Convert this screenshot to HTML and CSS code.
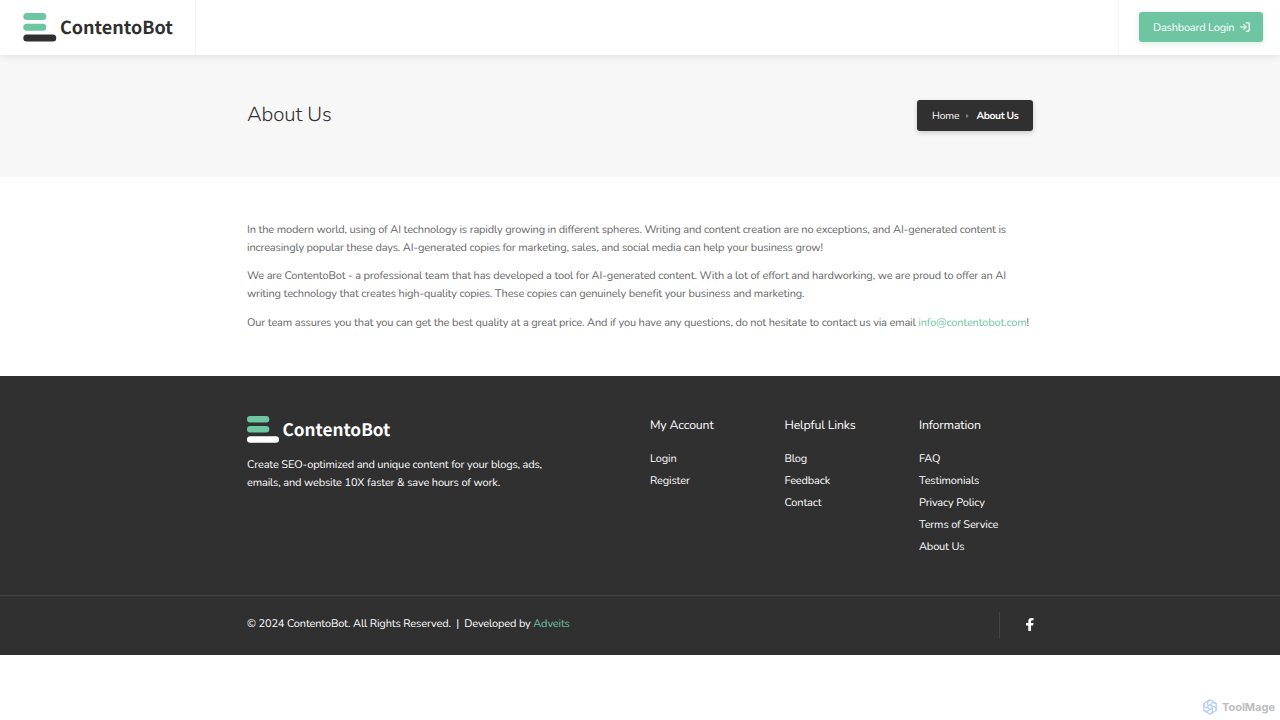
FILE: index.html
```html
<!DOCTYPE html>
<html lang="en">

<head>
    <meta charset="UTF-8">
    <meta name="viewport" content="width=device-width, initial-scale=1.0">
    <title>About Us - ContentoBot</title>
    <link rel="stylesheet" href="styles.css">
</head>

<body>
    <header class="header">
        <a href="#" class="header-logo">
            <svg class="logo-mark" width="34" height="29" viewBox="0 0 34 29">
                <rect x="0.3" y="0" width="23" height="7" rx="3.5" fill="#6ec5a1" />
                <rect x="0.3" y="10.8" width="23" height="7" rx="3.5" fill="#6ec5a1" />
                <rect x="0.3" y="21.4" width="33" height="7" rx="3.5" fill="#303030" />
            </svg>
            <span class="logo-text">ContentoBot</span>
        </a>
        <div class="header-right">
            <a href="#" class="login-btn">
                <span class="login-text">Dashboard Login</span>
                <svg width="10" height="10" viewBox="0 0 10 10" fill="none" stroke="#fff" stroke-width="1.2">
                    <path d="M0 5h6M3.5 2.3L6.2 5L3.5 7.7M5.8 0.8h2.6q.8 0 .8.8v6.8q0 .8-.8.8H5.8" />
                </svg>
            </a>
        </div>
    </header>

    <section class="titlebar">
        <div class="container titlebar-inner">
            <h1>About Us</h1>
            <nav class="breadcrumbs">
                <a href="#" class="crumb-home">Home</a>
                <span class="crumb-arrow"></span>
                <span class="crumb-here">About Us</span>
            </nav>
        </div>
    </section>

    <main class="container content">
        <p>
            <span class="line">In the modern world, using of AI technology is rapidly growing in different spheres. Writing and content creation are no exceptions, and AI-generated content is</span>
            <span class="line">increasingly popular these days. AI-generated copies for marketing, sales, and social media can help your business grow!</span>
        </p>
        <p>
            <span class="line">We are ContentoBot - a professional team that has developed a tool for AI-generated content. With a lot of effort and hardworking, we are proud to offer an AI</span>
            <span class="line">writing technology that creates high-quality copies. These copies can genuinely benefit your business and marketing.</span>
        </p>
        <p>
            <span class="line">Our team assures you that you can get the best quality at a great price. And if you have any questions, do not hesitate to contact us via email <a href="#">info@contentobot.com</a>!</span>
        </p>
    </main>

    <footer class="footer">
        <div class="container footer-top">
            <div class="footer-about">
                <div class="footer-logo">
                    <svg class="logo-mark" width="33" height="27" viewBox="0 0 33 27">
                        <rect x="0" y="0" width="22.3" height="6.4" rx="3.2" fill="#6ec5a1" />
                        <rect x="0" y="10" width="22.3" height="6.4" rx="3.2" fill="#6ec5a1" />
                        <rect x="0" y="20.2" width="32" height="6.5" rx="3.2" fill="#fff" />
                    </svg>
                    <span class="logo-text">ContentoBot</span>
                </div>
                <p>
                    <span class="line">Create SEO-optimized and unique content for your blogs, ads,</span>
                    <span class="line">emails, and website 10X faster &amp; save hours of work.</span>
                </p>
            </div>
            <div class="footer-links">
                <h3>My Account</h3>
                <ul>
                    <li><a href="#">Login</a></li>
                    <li><a href="#">Register</a></li>
                </ul>
            </div>
            <div class="footer-links">
                <h3>Helpful Links</h3>
                <ul>
                    <li><a href="#">Blog</a></li>
                    <li><a href="#">Feedback</a></li>
                    <li><a href="#">Contact</a></li>
                </ul>
            </div>
            <div class="footer-links">
                <h3>Information</h3>
                <ul>
                    <li><a href="#">FAQ</a></li>
                    <li><a href="#">Testimonials</a></li>
                    <li><a href="#">Privacy Policy</a></li>
                    <li><a href="#">Terms of Service</a></li>
                    <li><a href="#">About Us</a></li>
                </ul>
            </div>
        </div>
        <div class="footer-bottom">
            <div class="container footer-bottom-inner">
                <div class="copyright">© 2024 ContentoBot. All Rights Reserved. &nbsp;|&nbsp; Developed by <a href="#">Adveits</a></div>
                <a href="#" class="social">
                    <svg width="8" height="13" viewBox="0 0 8 13">
                        <path fill="#fff" d="M2.3 13V7.4H0V5h2.3V3.2C2.3 1.1 3.5 0 5.4 0C6.4 0 7.6.2 7.6.2v2H6.5C5.3 2.2 5 2.9 5 3.6V5h2.5l-.4 2.4H5V13z" />
                    </svg>
                </a>
            </div>
        </div>
    </footer>

    <div class="watermark">
        <svg width="16" height="16" viewBox="0 0 16 16" fill="none" stroke="#b4cdf3" stroke-width="1.2" stroke-linejoin="round">
            <path d="M8 .8l6.2 3.6v7.2L8 15.2l-6.2-3.6V4.4z" />
            <circle cx="8" cy="8" r="2.2" />
            <path d="M8 .8c-3 2-3 4-1.9 6M14.2 4.4C11 3 9 4.2 8.2 5.900M14.2 11.6c.4-3.4-2-4.7-4-4.2M8 15.2c3-2 3-4 1.9-6M1.8 11.6c3.2 1.4 5.2.2 6-1.5M1.8 4.4c-.4 3.4 2 4.7 4 4.2" />
        </svg>
        <span>ToolMage</span>
    </div>
</body>

</html>
```
FILE: styles.css
```css
* {
    box-sizing: border-box;
}

body,
h1,
h3,
p,
ul {
    margin: 0;
    padding: 0;
}

body {
    font-family: "Nunito", "Lato", sans-serif;
    font-size: 11px;
    letter-spacing: -0.153px;
    line-height: 18px;
    color: #666;
    background: #fff;
    height: 720px;
    overflow: hidden;
    text-rendering: geometricPrecision;
}

a {
    color: #6ec5a1;
    text-decoration: none;
}

li {
    list-style: none;
}

.line {
    display: block;
    white-space: nowrap;
}

.container {
    width: 786px;
    margin: 0 auto;
}

.logo-mark {
    display: block;
}

.logo-text {
    font-family: "Source Sans Pro", "Noto Sans CJK SC", sans-serif;
    font-weight: 700;
    letter-spacing: 0;
    white-space: nowrap;
}

/* header */
.header {
    height: 55px;
    display: flex;
    justify-content: space-between;
    background: #fff;
    position: relative;
    box-shadow: 0 0 9px rgba(0, 0, 0, .12);
}

.header-logo {
    display: flex;
    width: 196px;
    padding: 13px 0 0 23px;
    border-right: 1px solid #f2f2f2;
    height: 54px;
}

.header-logo .logo-text {
    font-size: 18px;
    line-height: 28px;
    margin-left: 3px;
    color: #303030;
}

.header-right {
    width: 162px;
    height: 54px;
    padding: 12px 0 0 20px;
    border-left: 1px solid #f4f4f4;
}

.login-btn {
    display: flex;
    align-items: center;
    gap: 5px;
    width: 124px;
    height: 30px;
    padding-left: 14px;
    color: #fff;
    background: #6ec5a1;
    border-radius: 3px;
    box-shadow: 0 2px 6px rgba(110, 197, 161, .25);
}

.login-text {
    width: 82px;
    padding-top: 1px;
    letter-spacing: -0.2px;
    white-space: nowrap;
}

/* titlebar */
.titlebar {
    height: 122px;
    background: #f7f7f7;
}

.titlebar-inner {
    height: 121px;
    display: flex;
    justify-content: space-between;
    align-items: center;
}

h1 {
    font-size: 20.4px;
    font-weight: 300;
    letter-spacing: -0.1px;
    line-height: 28px;
    padding-bottom: 2px;
    color: #303030;
}

.breadcrumbs {
    display: flex;
    align-items: center;
    width: 116px;
    height: 31px;
    padding-left: 15px;
    font-size: 10.3px;
    color: #fff;
    background: #303030;
    border-radius: 3px;
    box-shadow: 0 2px 5px rgba(0, 0, 0, .18);
}

.crumb-home {
    width: 34px;
    color: #fff;
}

.crumb-arrow {
    border: 2px solid transparent;
    border-left: 3px solid #808080;
    border-right: 0;
    margin-right: 7.5px;
}

.crumb-here {
    font-weight: 700;
    letter-spacing: -0.4px;
}

/* text */
.content {
    height: 199px;
    padding-top: 43.5px;
}

.content p {
    margin-bottom: 10.67px;
}

/* footer */
.footer {
    height: 279px;
    background: #303030;
    color: #fff;
}

.footer-top {
    display: grid;
    grid-template-columns: 403px 134.5px 134.5px 114px;
    height: 219px;
    padding-top: 40px;
}

.footer-logo {
    display: flex;
}

.footer-logo .logo-text {
    font-size: 17.2px;
    line-height: 26px;
    margin-left: 2.5px;
}

.footer-about p {
    margin-top: 13px;
    line-height: 17.5px;
}

h3 {
    font-size: 12.3px;
    font-weight: 400;
    line-height: 18px;
    padding-top: 1px;
    margin-bottom: 13px;
}

.footer-links li {
    height: 22px;
    line-height: 22px;
}

.footer-links a {
    color: #fff;
}

.footer-bottom {
    border-top: 1px solid #444;
}

.footer-bottom-inner {
    display: flex;
    justify-content: space-between;
    padding-top: 16px;
}

.copyright {
    line-height: 23px;
}

.social {
    width: 34.5px;
    height: 26px;
    padding: 6px 0 0 26px;
    border-left: 1px solid #444;
}

.watermark {
    display: flex;
    align-items: center;
    justify-content: flex-end;
    gap: 4px;
    margin: 43px 5px 0 0;
    font-family: "Inter", sans-serif;
    font-size: 11px;
    font-weight: 700;
    letter-spacing: 0;
    color: #bdbdbd;
}
```
